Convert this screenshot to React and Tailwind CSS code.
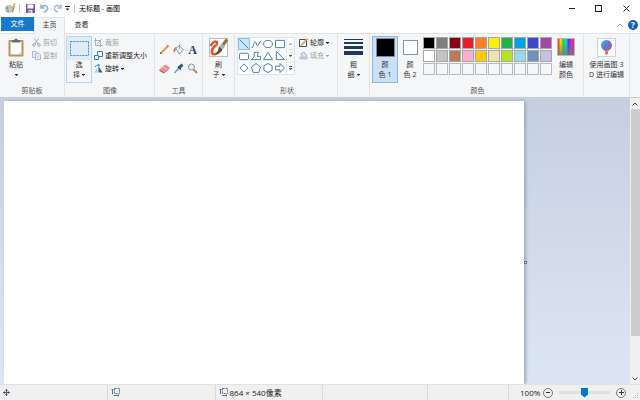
import React from 'react';

const palette = [
  ['#000000', '黑色'], ['#7f7f7f', '灰色-50%'], ['#880015', '深红色'], ['#ed1c24', '红色'], ['#ff7f27', '橙色'],
  ['#fff200', '黄色'], ['#22b14c', '绿色'], ['#00a2e8', '青绿'], ['#3f48cc', '靛青'], ['#a349a4', '紫色'],
  ['#ffffff', '白色'], ['#c3c3c3', '灰色-25%'], ['#b97a57', '褐色'], ['#ffaec9', '玫瑰色'], ['#ffc90e', '金色'],
  ['#efe4b0', '浅黄色'], ['#b5e61d', '酸橙色'], ['#99d9ea', '淡青绿色'], ['#7092be', '蓝灰色'], ['#c8bfe7', '淡紫色'],
];
const emptySlots = Array.from({ length: 10 }, (_, i) => i);

const shapes = [
  ['直线', 'M0.5 0.5L10.5 10.5'],
  ['曲线', 'M0.5 9.5C3 10 3 3 4.500 3S6 8.500 7.500 7.500S9 2.500 11 2.500'],
  ['椭圆形', 'M5.5 1.5C12 1.500 12 9.500 5.500 9.500S-1 1.500 5.500 1.500Z'],
  ['矩形', 'M0.5 1.500H10.500V9.500H0.500Z'],
  ['圆角矩形', 'M2 2.5H9Q10.500 2.500 10.500 4V8Q10.500 9.500 9 9.500H2Q0.500 9.500 0.500 8V4Q0.500 2.500 2 2.500Z'],
  ['多边形', 'M3.500 1.500H8L7 6H10.500V9.500H0.500L3.500 6.500Z'],
  ['三角形', 'M5.500 1.500L10.500 9.500H0.500Z'],
  ['直角三角形', 'M1.500 0.500V9.500H10.500Z'],
  ['菱形', 'M5.500 1L10 5.500L5.500 10L1 5.500Z'],
  ['五边形', 'M5.500 0.500L10.500 4.500L8.500 10.500H2.500L0.500 4.500Z'],
  ['六边形', 'M5.500 0.500L10 3V8L5.500 10.500L1 8V3Z'],
  ['右箭头', 'M0.500 3.500H5.500V0.500L10.500 5.500L5.500 10.500V7.500H0.500Z'],
];

function Caret({ className = 'text-[#333]' }) {
  return (
    <svg className={`inline-block w-[3px] h-[2px] ${className}`} viewBox="0 0 3 2" fill="currentColor" aria-hidden="true">
      <path d="M0 0H3V0.500L1.500 2L0 0.500Z" />
    </svg>
  );
}

function Group({ label, className, children }) {
  return (
    <section className={`shrink-0 flex flex-col pt-[2px] border-r border-[#e2e3e4] ${className}`}>
      <div className="h-[49px] flex">{children}</div>
      {label && <h2 className="text-center leading-[12px] text-[#555]">{label}</h2>}
    </section>
  );
}

function SmallButton({ icon, children, disabled, caret }) {
  return (
    <button disabled={disabled} className="flex items-center gap-[2px] h-[13px] whitespace-nowrap text-[#222] disabled:text-[#a0a0a0]">
      <svg className="w-[9px] h-[9px] shrink-0" viewBox="0 0 9 9" fill="none" aria-hidden="true">{icon}</svg>
      <span>{children}</span>
      {caret && <Caret className={disabled ? 'text-[#a0a0a0]' : 'text-[#222]'} />}
    </button>
  );
}

function Tool({ label, children }) {
  return (
    <button aria-label={label} className="w-[14px] h-[19px] flex items-center justify-center">
      <svg className="w-[11px] h-[11px]" viewBox="0 0 11 11" fill="none">{children}</svg>
    </button>
  );
}

function TitleBar() {
  return (
    <header className="flex items-center h-[17px] pl-[5px]">
      <svg className="w-[11px] h-[11px]" viewBox="0 0 11 11" fill="none" aria-hidden="true">
        <path d="M0.500 6.500Q0 2.500 4 2.500Q8 2.500 8 6Q8 8 6 8Q5 10 3 9.500Q1 9 0.500 6.500Z" fill="#b5d7e4" stroke="#729fae" strokeWidth=".6" />
        <circle cx="2.500" cy="5" r="1" fill="#e05a32" />
        <circle cx="5" cy="4.500" r="1" fill="#f3c735" />
        <circle cx="3" cy="7.500" r="1" fill="#5cae4d" />
        <path d="M9.500 0.500L7.500 9.500" stroke="#c8893f" strokeWidth="1.500" />
        <path d="M9.500 0L9 3" stroke="#efc75c" strokeWidth="1.800" />
      </svg>
      <span className="w-px h-[9px] bg-[#c6c6c6] ml-[3px] mr-[6px]" />
      <button aria-label="保存">
        <svg className="w-[9px] h-[9px]" viewBox="0 0 9 9">
          <path d="M0 0H9V9H0Z" fill="#7454a5" />
          <path d="M1.500 0.500H7.500V4.500H1.500Z" fill="#fff" />
          <path d="M2.500 6H6.500V9H2.500Z" fill="#e5dcf1" />
          <path d="M3.500 7H4.500V9H3.500Z" fill="#7454a5" />
        </svg>
      </button>
      <button aria-label="撤消" className="ml-[5px]">
        <svg className="w-[9px] h-[9px]" viewBox="0 0 9 9" fill="none" stroke="#8eadd0" strokeWidth="1.500">
          <path d="M1 0.500V4H4.500M1 3.500Q3 1 5.500 1.500Q8 2.500 7.500 5Q7 7 4 8.500" />
        </svg>
      </button>
      <button aria-label="重做" className="ml-1">
        <svg className="w-[9px] h-[9px]" viewBox="0 0 9 9" fill="none" stroke="#a9b9cc" strokeWidth="1.500">
          <path d="M8 0.500V4H4.500M8 3.500Q6 1 3.500 1.500Q1 2.500 1.500 5Q2 7 5 8.500" />
        </svg>
      </button>
      <button aria-label="自定义快速访问工具栏" className="ml-[3px]">
        <svg className="w-[5px] h-[5px]" viewBox="0 0 5 5" fill="#222"><path d="M0 0H5V1H0ZM0.500 2.500H4.500L2.500 4.500Z" /></svg>
      </button>
      <span className="w-px h-[9px] bg-[#c6c6c6] mx-1" />
      <h1 className="text-[7px] leading-[12px] text-black">无标题 - 画图</h1>
      <div className="ml-auto flex">
        <button aria-label="最小化" className="w-[27px] h-[17px] flex items-center justify-center">
          <span className="w-[6px] h-px bg-[#222]" />
        </button>
        <button aria-label="最大化" className="w-[27px] h-[17px] flex items-center justify-center">
          <span className="w-[7px] h-[7px] border border-[#222]" />
        </button>
        <button aria-label="关闭" className="w-[28px] h-[17px] flex items-center justify-center">
          <svg className="w-[7px] h-[7px]" viewBox="0 0 7 7" stroke="#222"><path d="M0.500 0.500L6.500 6.500M6.500 0.500L0.500 6.500" /></svg>
        </button>
      </div>
    </header>
  );
}

function Tabs() {
  return (
    <nav className="flex h-[16px] pl-px text-[7px] leading-[14px]">
      <button className="w-[33px] h-[14px] bg-[#1979ca] text-white">文件</button>
      <button className="w-[31px] h-[17px] pb-[2px] bg-[#f5f6f7] border-x border-t border-[#e2e3e4] relative text-[#333]">主页</button>
      <button className="w-[33px] h-[16px] pb-px text-[#333]">查看</button>
      <div className="ml-auto flex items-center gap-[5px] h-[16px] pr-[2px]">
        <button aria-label="最小化功能区">
          <svg className="w-[6px] h-1" viewBox="0 0 6 4" fill="none" stroke="#999"><path d="M0.500 3.500L3 1L5.500 3.500" /></svg>
        </button>
        <button aria-label="帮助" className="w-[10px] h-[10px] rounded-full bg-[#0f63b8] text-white font-bold text-[8px] leading-[10px]">?</button>
      </div>
    </nav>
  );
}

function Ribbon() {
  return (
    <div className="flex bg-[#f5f6f7] border-t border-[#e2e3e4] text-[7px] leading-[10px] text-[#333] overflow-hidden">
      <Group label="剪贴板" className="w-[65px]">
        <button className="w-[32px] pt-[2px] flex flex-col items-center">
          <svg className="w-4 h-[19px] mb-[3px]" viewBox="0 0 16 19" aria-hidden="true">
            <rect x="0.500" y="2" width="15" height="16.500" rx="1" fill="#b9935b" />
            <path d="M2.500 4H13.500V16.500H2.500Z" fill="#fff" />
            <path d="M10 16.500L13.500 13V16.500Z" fill="#c8d4e2" />
            <path d="M4 2H6Q8-1 10 2H12V4.500H4Z" fill="#69717b" />
          </svg>
          <span>粘贴</span>
          <span className="h-[10px] flex items-center"><Caret /></span>
        </button>
        <div>
          <SmallButton disabled icon={<g stroke="#9eacbd"><path d="M2.500 0.500L6 6M6.500 0.500L3 6" /><circle cx="2" cy="7" r="1.300" /><circle cx="7" cy="7" r="1.300" /></g>}>剪切</SmallButton>
          <SmallButton disabled icon={<g stroke="#a6b9d0" fill="#edf2f8"><path d="M0.500 0.500H4L5.500 2V6.500H0.500Z" /><path d="M3.500 2.500H7L8.500 4V8.500H3.500Z" /><path d="M5 5H7M5 6.500H7" strokeWidth=".6" /></g>}>复制</SmallButton>
        </div>
      </Group>

      <Group label="图像" className="w-[90px] pl-px">
        <button className="w-[26px] h-[47px] border border-[#b6d4ee] flex flex-col">
          <span className="w-full h-[23px] bg-[#dcecf9] flex items-center justify-center">
            <svg className="w-[19px] h-[15px]" viewBox="0 0 19 15" fill="none" aria-hidden="true">
              <rect x="0.500" y="0.500" width="18" height="14" stroke="#5588b4" strokeDasharray="2 1" />
            </svg>
          </span>
          <span className="w-full text-center">选</span>
          <span className="w-full flex items-center justify-center gap-[2px]">择<Caret /></span>
        </button>
        <div className="ml-[2px]">
          <SmallButton disabled icon={<g stroke="#a4b3c5"><path d="M1.500 0V7.500H9M0 2.500H6.500V9M3 6L8 1" /></g>}>裁剪</SmallButton>
          <SmallButton icon={<g stroke="#2783c4"><path d="M3.500 0.500H8.500V5.500H3.500Z" fill="#fff" /><path d="M0.500 4.500H4.500V8.500H0.500Z" fill="#fff" /></g>}>重新调整大小</SmallButton>
          <SmallButton caret icon={<g><path d="M4.500 2V8.500H8.500Z" fill="#23658f" /><path d="M3.500 4V8.500H0.500Z" fill="#9cc6e5" /><path d="M1 3Q2 0.500 5 1M4 0L5.500 1L4 2.500" stroke="#2783c4" /></g>}>旋转</SmallButton>
        </div>
      </Group>

      <Group label="工具" className="w-[48px]">
        <div className="grid grid-cols-3 content-start pt-1 mx-auto">
          <Tool label="铅笔">
            <path d="M1.500 9.500L9 2" stroke="#d99f45" strokeWidth="1.800" />
            <path d="M8 3L9.500 1.500" stroke="#d87967" strokeWidth="1.800" />
            <path d="M1 10L1.500 8L3 9.500Z" fill="#414141" />
          </Tool>
          <Tool label="用颜色填充">
            <path d="M3 4.500L6.500 1.500L10.500 6L6 10Z" fill="#e8eff5" stroke="#718fa8" strokeWidth=".8" />
            <path d="M6.500 5V1Q6.500 0 7.500 0.500" stroke="#718fa8" strokeWidth=".8" />
            <path d="M4 3Q0 3 0.500 8.500Q2.500 8 3 4.500Z" fill="#e36b42" />
          </Tool>
          <button aria-label="文本" className="w-[14px] h-[19px] font-['Liberation_Serif',serif] font-bold text-[12px] text-[#1d3f67]">A</button>
          <Tool label="橡皮擦">
            <path d="M0.500 6.500L6 1.500L10.500 4L5 9Z" fill="#eb9097" />
            <path d="M0.500 6.500L5 9V10.500L0.500 8Z" fill="#bd4d59" />
            <path d="M10.500 4V5.500L5 10.500V9Z" fill="#d6707a" />
            <path d="M4 4L8 6.500" stroke="#f7c3c5" />
          </Tool>
          <Tool label="颜色选取器">
            <path d="M1.500 10L6 5" stroke="#76a3c4" strokeWidth="1.800" />
            <path d="M5 3.500L8 6.500" stroke="#193f6b" strokeWidth="1.500" />
            <path d="M6.500 4.500L9.500 1.500" stroke="#285985" strokeWidth="3" />
          </Tool>
          <Tool label="放大镜">
            <circle cx="4.500" cy="4" r="3" fill="#e4f2fb" stroke="#7e9bb1" />
            <path d="M6.500 6.500L10 10" stroke="#b88752" strokeWidth="1.800" />
          </Tool>
        </div>
      </Group>

      <Group className="w-[32px]">
        <button className="w-full pt-[2px] flex flex-col items-center">
          <svg className="w-[19px] h-[19px] mb-[3px]" viewBox="0 0 19 19" fill="none" aria-hidden="true">
            <rect x="0.500" y="0.500" width="18" height="18" fill="#fff" stroke="#a9c3d6" />
            <path d="M1.500 8Q5 2 8 4Q9 6 5 9Q2 12 3 15Q5 18 10 14" stroke="#e2522f" strokeWidth="2.500" />
            <path d="M18 1.500L14 7" stroke="#a5672f" strokeWidth="3" />
            <path d="M12.500 5.500L16 8.500L13.500 11.500L10 8.500Z" fill="#a9b0b5" />
            <path d="M10 8.500L13.500 11.500Q12 15.500 6.500 16.500Q9.500 13 10 8.500Z" fill="#6b4b33" />
          </svg>
          <span>刷</span>
          <span className="flex items-center gap-[2px]">子<Caret /></span>
        </button>
      </Group>

      <Group label="形状" className="w-[103px] pl-[2px]">
        <div className="flex h-[38px] mt-px border border-[#dce5ed] bg-[#fafcfd]">
          <div className="grid grid-cols-[repeat(4,12px)] auto-rows-[12px]">
            {shapes.map(([name, d], i) => (
              <button key={name} aria-label={name} className={i === 0 ? 'bg-[#cce4f7] border border-[#8dbfe8]' : 'p-px'}>
                <svg className="w-[10px] h-[10px]" viewBox="0 0 11 11" fill="none" stroke="#40749f"><path d={d} /></svg>
              </button>
            ))}
          </div>
          <div className="w-2 border-l border-[#dce5ed] flex flex-col">
            <button aria-label="上一行" className="flex-1 flex items-center justify-center"><Caret className="text-[#aaa] rotate-180" /></button>
            <button aria-label="下一行" className="flex-1 flex items-center justify-center border-y border-[#e4eaf0]"><Caret className="text-[#555]" /></button>
            <button aria-label="更多形状" className="flex-1 flex flex-col items-center justify-center gap-px">
              <span className="w-[3px] h-px bg-[#555]" />
              <Caret className="text-[#555]" />
            </button>
          </div>
        </div>
        <div className="ml-1">
          <SmallButton caret icon={<g><path d="M0.500 1.500H7.500V8.500H0.500Z" fill="#fff" stroke="#3d5470" /><path d="M2 7.500L8.500 0.500" stroke="#dda34a" strokeWidth="1.800" /></g>}>轮廓</SmallButton>
          <SmallButton disabled caret icon={<g><path d="M2 3L5 1L8 5L5 7.500Z" fill="#e4e8ed" stroke="#a4b3c5" /><path d="M0.500 5.500H8.500V8.500H0.500Z" fill="#bbc5dc" /></g>}>填充</SmallButton>
        </div>
      </Group>

      <Group className="w-[32px]">
        <button className="w-full pt-[2px] flex flex-col items-center">
          <span className="w-[19px] h-[19px] mb-[3px] flex flex-col gap-[2px] pt-px">
            <span className="h-px bg-[#1f3a5e]" />
            <span className="h-[2px] bg-[#1f3a5e]" />
            <span className="h-[3px] bg-[#1f3a5e]" />
            <span className="h-1 bg-[#1f3a5e]" />
          </span>
          <span>粗</span>
          <span className="flex items-center gap-[2px]">细<Caret /></span>
        </button>
      </Group>

      <Group label="颜色" className="w-[214px] pl-[2px]">
        <button aria-pressed="true" className="w-[26px] h-[47px] pt-px bg-[#c9e0f7] border border-[#84b9e8] flex flex-col items-center">
          <span className="w-[19px] h-[19px] mb-[3px] border border-[#7b8998] bg-black" />
          <span>颜</span>
          <span>色 1</span>
        </button>
        <button aria-pressed="false" className="w-[24px] pt-[2px] flex flex-col items-center">
          <span className="w-[19px] h-[19px] mb-[3px] p-[2px]"><span className="block h-full border border-[#8c949c] bg-white" /></span>
          <span>颜</span>
          <span>色 2</span>
        </button>
        <div className="grid grid-cols-[repeat(10,12px)] auto-rows-[12px] gap-px mt-px ml-px">
          {palette.map(([color, name]) => (
            <button key={color} aria-label={name} className="border border-[#a6a6a6]" style={{ backgroundColor: color }} />
          ))}
          {emptySlots.map((i) => (
            <button key={i} aria-label="自定义颜色" className="border border-[#b8b9ba] bg-[#f5f6f7]" />
          ))}
        </div>
        <button className="w-[28px] pt-[2px] flex flex-col items-center">
          <span className="w-[18px] h-[18px] mb-1 border border-[#b9b9b9] bg-[linear-gradient(to_bottom,transparent_20%,#777c),linear-gradient(to_right,#f02a20,#f4e020,#28d030,#20d8e8,#3840e0,#e028d8,#f02040)]" />
          <span>编辑</span>
          <span>颜色</span>
        </button>
      </Group>

      <Group className="w-[46px]">
        <button className="w-full pt-[2px] flex flex-col items-center whitespace-nowrap">
          <svg className="w-[19px] h-[19px] mb-[3px]" viewBox="0 0 19 19" aria-hidden="true">
            <defs>
              <linearGradient id="drop" x1="0" y1="0" x2="1" y2="1">
                <stop offset="0" stopColor="#25b5ed" />
                <stop offset=".45" stopColor="#6277d8" />
                <stop offset="1" stopColor="#ef3e75" />
              </linearGradient>
            </defs>
            <rect x="0.500" y="0.500" width="18" height="18" fill="#fff" stroke="#d0d3d6" />
            <path d="M9.500 2Q15 2.500 15 7.500Q14.500 11 11 13V15.500Q9.500 17.500 8 15.500V13Q4.500 11 4 7.500Q4 2.500 9.500 2Z" fill="url(#drop)" />
            <path d="M8 12H11V15.500Q9.500 17.500 8 15.500Z" fill="#ee6a6f" />
          </svg>
          <span>使用画图 3</span>
          <span>D 进行编辑</span>
        </button>
      </Group>
    </div>
  );
}

function ScrollBar() {
  return (
    <div className="w-[10px] shrink-0 bg-[#f0f0f0] flex flex-col">
      <button aria-label="向上滚动" className="h-[11px] flex items-center justify-center">
        <svg className="w-[6px] h-1" viewBox="0 0 6 4" fill="none" stroke="#444"><path d="M0.500 3.500L3 1L5.500 3.500" /></svg>
      </button>
      <div className="flex-1"><div className="h-[86%] ml-px bg-[#cdcdcd]" /></div>
      <button aria-label="向下滚动" className="h-[11px] flex items-center justify-center">
        <svg className="w-[6px] h-1" viewBox="0 0 6 4" fill="none" stroke="#444"><path d="M0.500 0.500L3 3L5.500 0.500" /></svg>
      </button>
    </div>
  );
}

function SizeIcon() {
  return (
    <svg className="w-[9px] h-[9px]" viewBox="0 0 9 9" fill="none" stroke="#56708c" aria-hidden="true">
      <path d="M3.500 0.500H8.500V5.500H3.500Z" strokeDasharray="2 1" />
      <path d="M1.500 1V6M0.500 1.500H2.500M3 7.500H8M7.500 6.500V8.500" />
    </svg>
  );
}

function StatusBar() {
  return (
    <footer className="flex h-4 bg-[#f0f0f0] border-t border-[#e2e2e2] text-[8px] text-[#222]">
      <div className="flex-1 flex items-center pl-[3px] border-r border-[#d9d9d9]">
        <svg className="w-[7px] h-[7px]" viewBox="0 0 7 7" fill="none" stroke="#43566b" aria-hidden="true">
          <path d="M3.500 0V7M0 3.500H7M2.500 1.500H4.500M2.500 5.500H4.500M1.500 2.500V4.500M5.500 2.500V4.500" />
        </svg>
      </div>
      <div className="flex-1 flex items-center pl-[3px] border-r border-[#d9d9d9]"><SizeIcon /></div>
      <div className="flex-1 flex items-center gap-[2px] pl-[3px] border-r border-[#d9d9d9] whitespace-nowrap">
        <SizeIcon />
        <span>864 × 540像素</span>
      </div>
      <div className="flex-1 border-r border-[#d9d9d9]" />
      <div className="w-[81px] border-r border-[#d9d9d9]" />
      <div className="w-[131px] flex items-center pl-[11px] pr-px">
        <label htmlFor="zoom" className="w-[23px]">100%</label>
        <button aria-label="缩小" className="w-[10px] h-[10px] rounded-full border border-[#777] flex items-center justify-center">
          <span className="w-1 h-px bg-[#333]" />
        </button>
        <input
          id="zoom"
          type="range"
          min="0"
          max="100"
          defaultValue="50"
          className="appearance-none w-[51px] h-[3px] mx-[6px] bg-[#e0e0e0] [&::-webkit-slider-thumb]:appearance-none [&::-webkit-slider-thumb]:w-[7px] [&::-webkit-slider-thumb]:h-[10px] [&::-webkit-slider-thumb]:bg-[#0078d7] [&::-webkit-slider-thumb]:[clip-path:polygon(0_0,100%_0,100%_70%,50%_100%,0_70%)]"
        />
        <button aria-label="放大" className="w-[10px] h-[10px] rounded-full border border-[#777] flex items-center justify-center">
          <svg className="w-[5px] h-[5px]" viewBox="0 0 5 5" stroke="#333"><path d="M2.500 0V5M0 2.500H5" /></svg>
        </button>
        <svg className="w-[6px] h-[6px] ml-auto self-end mb-px" viewBox="0 0 6 6" fill="#b5b5b5" aria-hidden="true">
          <path d="M4 0H5V1H4ZM2 2H3V3H2ZM4 2H5V3H4ZM0 4H1V5H0ZM2 4H3V5H2ZM4 4H5V5H4Z" />
        </svg>
      </div>
    </footer>
  );
}

export default function App() {
  return (
    <div className="h-screen flex flex-col bg-white font-['Open_Sans','Noto_Sans_CJK_SC',sans-serif] overflow-hidden">
      <TitleBar />
      <Tabs />
      <Ribbon />
      <div className="flex-1 min-h-0 flex border-t border-[#c9ceda]">
        <main className="flex-1 flex pl-1 pt-[3px] bg-linear-to-b from-[#c5cfe0] to-[#dce6f3]">
          <div className="flex-1 bg-white shadow-[2px_0_3px_#9caabd]" />
          <div className="w-[17%] flex flex-col justify-center">
            <span className="w-[3px] h-[3px] mt-10 border border-[#5f6b7a] bg-white relative" />
          </div>
        </main>
        <ScrollBar />
      </div>
      <StatusBar />
    </div>
  );
}
